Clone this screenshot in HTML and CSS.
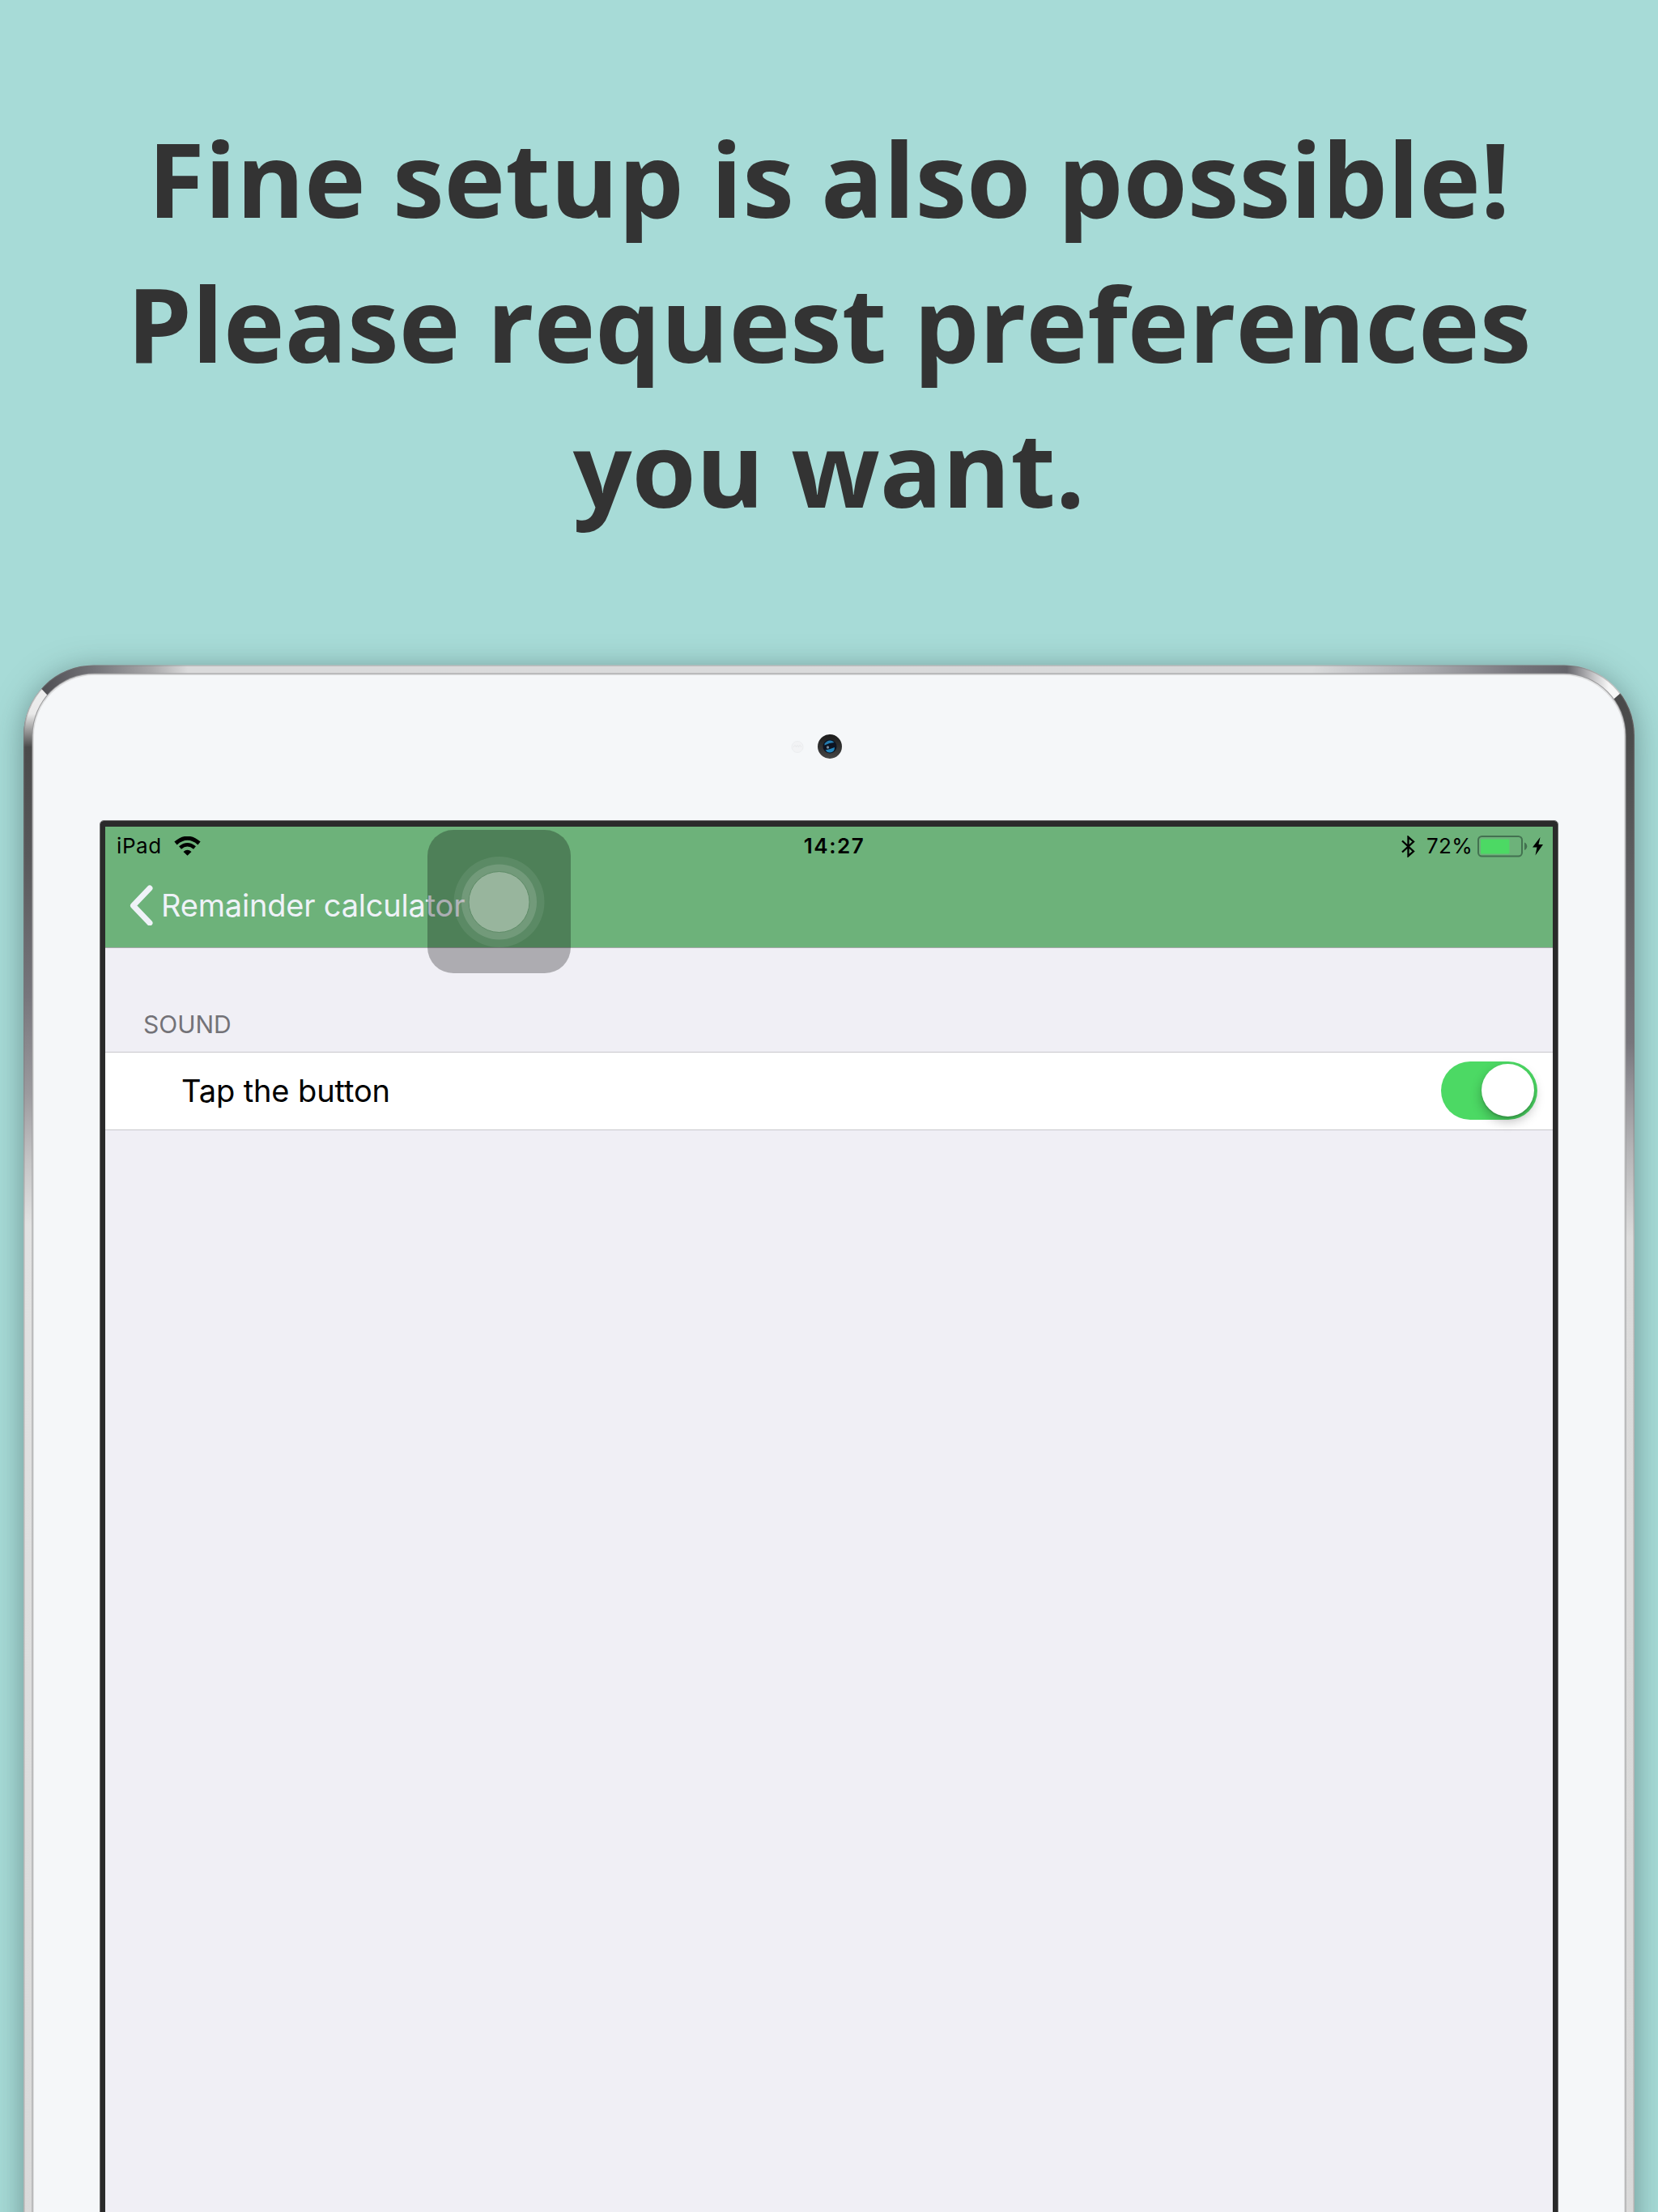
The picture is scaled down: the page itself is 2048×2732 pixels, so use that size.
FILE: index.html
```html
<!DOCTYPE html>
<html lang="en">
<head>
<meta charset="utf-8">
<title>Remainder calculator</title>
<link rel="stylesheet" href="styles.css">
</head>
<body>
<main class="poster">
  <h1 class="headline">Fine setup is also possible!<br>Please request preferences<br>you want.</h1>
  <section class="device">
    <svg class="device-frame" viewBox="0 0 1990 1960" width="1990" height="1960" aria-hidden="true">
      <defs>
        <linearGradient id="side-left" gradientUnits="userSpaceOnUse" x1="0" y1="0" x2="0" y2="1960">
          <stop offset="0" stop-color="#f4f4f4"/><stop offset=".031" stop-color="#e9e9e9"/><stop offset=".052" stop-color="#4a4a4a"/>
          <stop offset=".12" stop-color="#58585a"/><stop offset=".209" stop-color="#77767c"/><stop offset=".271" stop-color="#9c9b9f"/>
          <stop offset=".312" stop-color="#c4c4c5"/><stop offset=".353" stop-color="#e2e2e2"/><stop offset="1" stop-color="#d9d9d9"/>
        </linearGradient>
        <linearGradient id="side-right" gradientUnits="userSpaceOnUse" x1="0" y1="0" x2="0" y2="1960">
          <stop offset="0" stop-color="#484848"/><stop offset=".05" stop-color="#4c4c4c"/>
          <stop offset=".12" stop-color="#5c5c5e"/><stop offset=".238" stop-color="#77767c"/><stop offset=".265" stop-color="#929196"/>
          <stop offset=".306" stop-color="#b5b5b7"/><stop offset=".361" stop-color="#dcdcdc"/><stop offset="1" stop-color="#d9d9d9"/>
        </linearGradient>
        <linearGradient id="top-edge" gradientUnits="userSpaceOnUse" x1="0" y1="0" x2="1990" y2="0">
          <stop offset=".012" stop-color="#505054"/><stop offset=".045" stop-color="#75757a"/><stop offset=".08" stop-color="#aaaaac"/>
          <stop offset=".102" stop-color="#dadadb"/><stop offset=".8" stop-color="#d9dadb"/><stop offset=".87" stop-color="#aaabaf"/>
          <stop offset=".93" stop-color="#75747b"/><stop offset=".958" stop-color="#65656b"/><stop offset=".975" stop-color="#c8c8ca"/><stop offset=".984" stop-color="#f6f6f6"/>
        </linearGradient>
        <clipPath id="clip-left"><path d="M0 6L86 98V1960H0Z"/></clipPath>
        <clipPath id="clip-right"><path d="M1990 20L1904 95V1960H1990Z"/></clipPath>
      </defs>
      <rect y=".4" width="1990" height="2100" rx="87" fill="url(#top-edge)"/>
      <g clip-path="url(#clip-left)"><rect y=".4" width="1990" height="2100" rx="87" fill="url(#side-left)"/></g>
      <g clip-path="url(#clip-right)"><rect y=".4" width="1990" height="2100" rx="87" fill="url(#side-right)"/></g>
      <rect x=".75" y="1" width="1988.5" height="2100" rx="86" fill="none" stroke="#777" stroke-opacity=".4" stroke-width="1.5"/>
      <rect x="10.500" y="10.500" width="1969" height="2100" rx="77" fill="#98989a"/>
      <rect x="11.500" y="11.500" width="1967" height="2100" rx="76" fill="#dedfe0"/>
      <rect x="13" y="13" width="1964" height="2100" rx="75" fill="#f5f7f9"/>
    </svg>
    <div class="camera-row">
      <svg width="64" height="32" viewBox="0 0 64 32" aria-hidden="true">
        <defs><linearGradient id="lens" x1="0" y1="0" x2="0" y2="1"><stop offset="0" stop-color="#1b1b1b"/><stop offset="1" stop-color="#464646"/></linearGradient></defs>
        <circle cx="9" cy="16.500" r="7" fill="#f2f3f5" stroke="#eceef0"/>
        <path d="M4 17q2-5 4 0M7 17q2-5 4 0M10 17q2-5 4 0" stroke="#e9ebed" fill="none"/>
        <circle cx="49" cy="16" r="15" fill="url(#lens)"/>
        <circle cx="49" cy="16" r="8.500" fill="#0c1422"/>
        <path d="M42.500 12.500q6-7 12-1.500q-6 0-12 3.500z" fill="#257cae"/>
        <path d="M43.500 20.500q6-1.500 11.500-3.500q0 6-6 6.500q-4-.5-5.500-3z" fill="#2286bd"/>
        <circle cx="46.500" cy="17" r="1.700" fill="#75899c"/>
      </svg>
    </div>
    <div class="screen">
      <header class="topbar">
        <div class="status">
          <div class="status-left">
            <span class="carrier">iPad</span>
            <svg width="33" height="24" viewBox="0 0 33 24" aria-hidden="true">
              <path d="M2 8.500Q16.500-4 31 8.500" fill="none" stroke="#000" stroke-width="5"/>
              <path d="M7.500 14Q16.500 6.500 25.500 14" fill="none" stroke="#000" stroke-width="4.500"/>
              <path d="M11.500 19Q16.500 14.500 21.500 19L16.500 23.800Z"/>
            </svg>
          </div>
          <span class="clock">14:27</span>
          <div class="status-right">
            <svg class="bluetooth" width="17" height="27" viewBox="0 0 17 27" aria-hidden="true"><path d="M1 6.500L15 19.500L8.500 25.200V1.800L15 7.500L1 20.500" fill="none" stroke="#000" stroke-width="2.300"/></svg>
            <span class="percent">72%</span>
            <svg class="battery" width="62" height="27" viewBox="0 0 62 27" aria-hidden="true">
              <rect x="1" y="1" width="54" height="24.500" rx="4.500" fill="none" stroke="#437150" stroke-width="2"/>
              <rect x="4" y="4.500" width="35.500" height="18" rx="1" fill="#4cd964"/>
              <path d="M58 8.500Q61.300 10 61.300 13.300T58 18.100Z" fill="#437150"/>
            </svg>
            <svg width="13" height="23" viewBox="0 0 13 23" aria-hidden="true"><path d="M9.500 0L0 12.500H5.500L3.500 22.500L13 9H7.500Z"/></svg>
          </div>
        </div>
        <nav class="nav">
          <svg width="29" height="50" viewBox="0 0 29 50" aria-hidden="true"><path d="M25 4L4.500 25.500L25 47" fill="none" stroke="#eff2f8" stroke-width="7" stroke-linecap="round" stroke-linejoin="round"/></svg>
          <span class="back">Remainder calculator</span>
        </nav>
      </header>
      <h2 class="section-title">SOUND</h2>
      <div class="row">
        <span class="row-label">Tap the button</span>
        <div class="switch"><div class="knob"></div></div>
      </div>
      <div class="assistive">
        <svg width="177" height="177" viewBox="0 0 177 177" aria-hidden="true">
          <g fill="#fff"><circle cx="88.500" cy="89" r="56" opacity=".08"/><circle cx="88.500" cy="89" r="46.500" opacity=".14"/></g>
          <circle cx="88.500" cy="89" r="37.500" fill="#98b59d" stroke="#5f8c68" stroke-width="1"/>
        </svg>
      </div>
    </div>
  </section>
</main>
</body>
</html>
```
FILE: styles.css
```css
* { box-sizing: border-box; }
body { margin: 0; background: #a7dbd7; }
.poster {
  width: 2048px;
  height: 2732px;
  overflow: hidden;
  display: flex;
  flex-direction: column;
  align-items: center;
  padding-top: 130px;
}
.headline {
  margin: 0;
  height: 691px;
  flex: none;
  font: 700 128px/179.200px "Open Sans", "Noto Sans", sans-serif;
  color: #333;
  text-align: center;
  white-space: nowrap;
}
.device {
  position: relative;
  width: 1990px;
  height: 2100px;
  flex: none;
  border-radius: 87px;
  box-shadow: 0 6px 36px rgba(60, 90, 90, .55);
  font-family: Inter, sans-serif;
}
.device-frame { position: absolute; left: 0; top: 0; display: block; }
.camera-row {
  position: relative;
  height: 193px;
  padding: 85px 0 0 947px;
}
.camera-row svg { display: block; }
.screen {
  position: relative;
  margin-left: 95px;
  width: 1800px;
  height: 1900px;
  border: 6px solid #2a2a2a;
  border-top-width: 7px;
  border-radius: 4px;
  outline: 1px solid #6a6a6b;
  background: #f0eff5;
}
.topbar {
  height: 150px;
  background: #6db27a;
  border-bottom: 1px solid #a5a8a9;
}
.status {
  height: 48px;
  display: grid;
  grid-template-columns: 1fr auto 1fr;
  align-items: center;
  padding: 0 12px 0 14px;
  font-size: 26px;
  line-height: 32px;
}
.status-left, .status-right { display: flex; align-items: center; }
.status-left { gap: 15px; }
.status-right { justify-content: flex-end; }
.carrier { letter-spacing: .6px; }
.clock { font-weight: 600; letter-spacing: 1.500px; padding-left: 11px; }
.bluetooth { margin-right: 14px; }
.percent { margin-right: 6px; letter-spacing: .3px; }
.battery { margin-right: 6px; }
.nav {
  height: 98px;
  display: flex;
  align-items: center;
  padding-left: 30px;
  gap: 10px;
  color: #eff2f8;
}
.back { font-size: 38px; line-height: 46px; letter-spacing: -.2px; }
.section-title {
  margin: 0;
  height: 128px;
  padding: 75px 0 0 47px;
  font-size: 30px;
  line-height: 38px;
  font-weight: 400;
  color: #737277;
}
.row {
  height: 97px;
  display: flex;
  align-items: center;
  justify-content: space-between;
  padding: 0 19px 2px 94px;
  background: #fff;
  border-top: 1px solid #c8c7cc;
  border-bottom: 1px solid #c8c7cc;
}
.row-label { font-size: 38px; line-height: 46px; letter-spacing: -.1px; }
.switch {
  width: 119px;
  height: 72px;
  padding: 3px 4px 0 0;
  border-radius: 36px;
  background: #4cd964;
  display: flex;
  justify-content: flex-end;
}
.knob {
  width: 65px;
  height: 65px;
  border-radius: 50%;
  background: #fff;
  box-shadow: 0 6px 14px rgba(0, 0, 0, .28), 0 2px 2px rgba(0, 0, 0, .15);
}
.assistive {
  position: absolute;
  left: 398px;
  top: 4px;
  width: 177px;
  height: 177px;
  border-radius: 32px;
  background: rgba(0, 0, 0, .28);
}
.assistive svg { display: block; }
```
